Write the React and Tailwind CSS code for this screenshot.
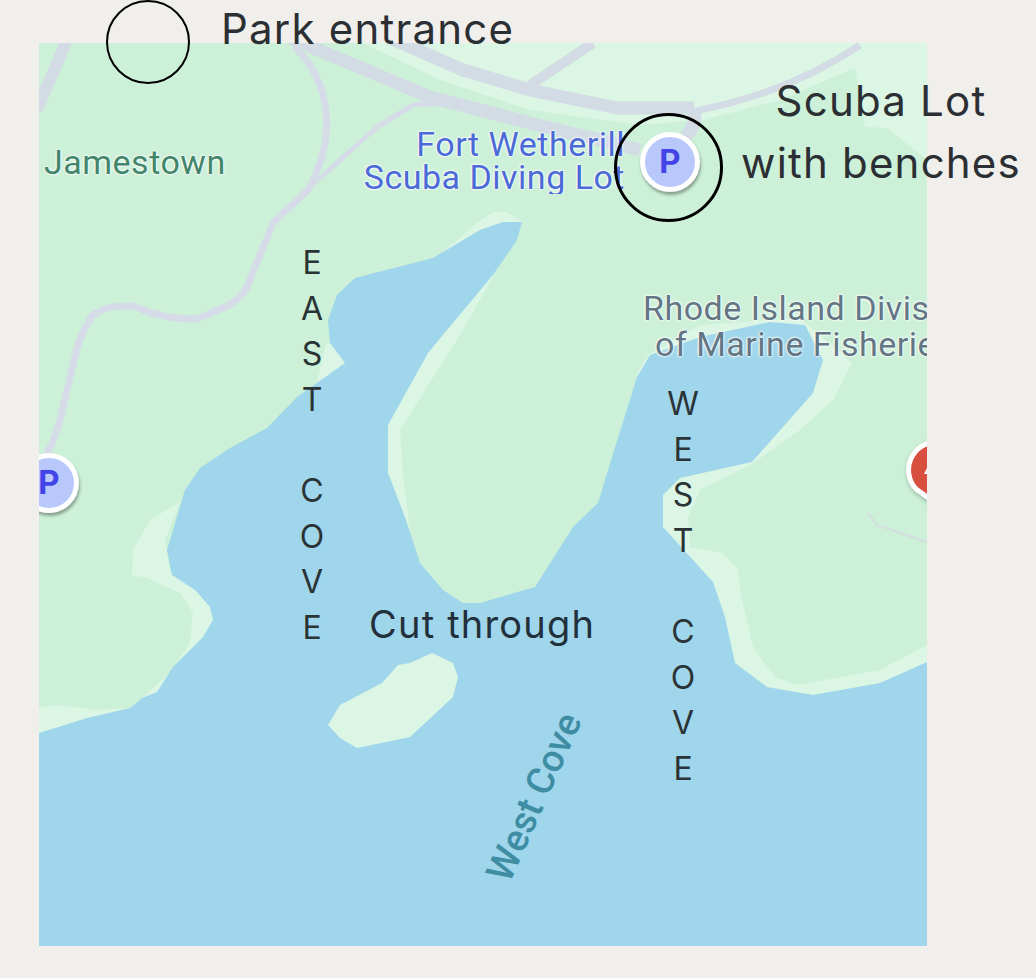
const eastCove = ['E', 'A', 'S', 'T', '\u00a0', 'C', 'O', 'V', 'E'];
const westCove = ['W', 'E', 'S', 'T', '\u00a0', 'C', 'O', 'V', 'E'];

const halo = '[text-shadow:0_0_2px_#fff,0_0_2px_#fff,0_0_3px_#fff]';

function ParkingPin({ className }) {
  return (
    <div className={`absolute flex h-[60px] w-[60px] items-center justify-center rounded-full border-[5px] border-white bg-[#b9c8fb] shadow-[1px_3px_3px_rgba(60,70,60,0.45)] ${className}`}>
      <span className="font-['Roboto',sans-serif] text-[33px] font-bold text-[#4343e8]">P</span>
    </div>
  );
}

function VerticalWord({ letters, className }) {
  return (
    <div className={`absolute flex w-[40px] flex-col items-center font-['Inter',sans-serif] text-[32px] leading-[45.6px] text-[#2a3336] ${className}`}>
      {letters.map((l, i) => <span key={i}>{l}</span>)}
    </div>
  );
}

function MapArt() {
  return (
    <svg viewBox="39 43 888 903" className="absolute inset-0 h-full w-full">
      {/* lighter land up top */}
      <polygon fill="#dcf6e5" points="363,43 927,43 927,160 887,128 865,127 855,68 780,100 703,120 640,125 530,110 440,80" />

      {/* shore rims */}
      <polygon fill="#dcf6e5" points="180,502 150,520 133,550 132,575 147,578 167,587 180,593 193,613 190,643 170,673 143,697 130,708 97,710 57,705 39,708 39,740 130,715 175,675 220,625 215,600 170,570 165,540" />
      <polygon fill="#dcf6e5" points="326,343 316,385 297,397 350,375 350,350" />
      <polygon fill="#dcf6e5" points="440,255 477,223 493,212 507,212 522,222 518,232 463,330 400,430 403,473 410,530 380,480 380,420 440,320" />
      <polygon fill="#dcf6e5" points="637,373 648,355 700,325 800,318 852,363 833,400 800,430 753,463 700,490 688,517 690,547 723,553 738,570 740,590 753,647 775,677 797,685 880,670 927,645 927,670 813,700 767,695 730,670 715,620 700,570 650,520 640,400" />

      {/* water */}
      <polygon fill="#a0d6eb" points="39,733 87,718 130,708 142,698 157,692 173,667 203,637 213,620 210,607 195,590 172,575 167,550 185,490 200,468 230,448 267,428 297,397 345,363 330,343 328,320 337,295 355,278 433,258 480,230 503,222 522,222 517,240 493,275 447,330 428,353 388,425 388,473 405,517 420,563 443,590 463,603 480,603 535,587 573,527 598,503 608,470 637,377 650,355 700,337 770,322 805,325 823,360 813,393 752,462 680,478 663,495 663,527 713,582 725,617 735,663 767,687 813,695 880,683 927,662 927,946 39,946" />
      <polygon fill="#dcf6e5" points="432,653 453,663 458,677 453,697 410,737 357,748 340,738 328,725 340,705 382,683 398,665 410,663" />

      {/* roads */}
      <g fill="none" stroke="#d3dce4" strokeLinejoin="round">
        <polyline strokeWidth="13" points="290,38 430,97 530,123 640,150" />
        <polyline strokeWidth="13" points="390,38 463,70 530,90 617,108 694,108" />
        <path strokeWidth="13" d="M694 108 Q698 124 685 137" />
        <polyline strokeWidth="10" points="530,85 593,43" />
        <path strokeWidth="7" d="M700 110 Q790 92 860 45" />
        <polyline strokeWidth="12" points="67,40 37,110" />
      </g>
      <g fill="none" stroke="#d5dce8" strokeLinejoin="round" strokeLinecap="round">
        <path strokeWidth="7" d="M296 48 Q322 75 326 110 Q330 150 308 190 L273 223 Q258 260 247 287 Q240 300 225 307 L197 319 Q165 320 133 306 Q105 305 92 316 Q80 335 76 352 L60 420 Q55 440 39 470" />
        <polyline strokeWidth="5" points="310,187 377,127 413,105 447,103" />
        <polyline strokeWidth="6" points="39,510 45,505" />
      </g>
      <polyline fill="none" stroke="#d5dde0" strokeWidth="2" points="868,513 877,525 927,542" />

      {/* red pin, cut by the map edge */}
      <path className="drop-shadow-[1px_2px_2px_rgba(60,70,60,0.4)]" fill="#d94f3f" stroke="#fff" strokeWidth="5" d="M937 442 A28 28 0 0 0 916 489 L930 499 L960 480 A28 28 0 0 0 937 442 Z" />
      <polygon fill="#fff" points="924,474 928,466 928,474" />
    </svg>
  );
}

export default function App() {
  return (
    <div className="relative h-[978px] w-[1036px] overflow-hidden bg-[#f0efeb]">
      <div className="absolute left-[39px] top-[43px] h-[903px] w-[888px] overflow-hidden bg-[#ccf0d8]">
        <MapArt />

        {/* map labels */}
        <div className={`absolute left-[5px] top-[99px] font-['Roboto',sans-serif] text-[34px] tracking-[0.5px] leading-[40px] text-[#42856a] ${halo}`}>Jamestown</div>
        <div className={`absolute left-[286px] top-[85px] w-[300px] overflow-hidden whitespace-nowrap text-right font-['Roboto',sans-serif] text-[34px] tracking-[0.5px] leading-[33px] text-[#4a6ad6] ${halo}`}>
          <div>Fort Wetherill</div>
          <div>Scuba Diving Lot</div>
        </div>
        <div className={`absolute left-[604px] top-[247px] whitespace-nowrap font-['Roboto',sans-serif] text-[34px] tracking-[0.5px] leading-[36px] text-[#627684] ${halo}`}>
          <div>Rhode Island Division</div>
          <div className="pl-[12px]">of Marine Fisheries</div>
        </div>
        <div className="absolute left-[405px] top-[732px] -rotate-[66deg] whitespace-nowrap font-['Roboto',sans-serif] text-[38px] font-medium leading-[44px] text-[#3f8da3]">West Cove</div>

        <ParkingPin className="left-[601px] top-[89px]" />
        <ParkingPin className="left-[-20px] top-[410px]" />
      </div>

      {/* hand annotations laid over the map */}
      <div className="absolute left-[106px] top-0 h-[84px] w-[84px] rounded-full border-2 border-black" />
      <div className="absolute left-[614px] top-[113px] h-[109px] w-[109px] rounded-full border-[3px] border-black" />

      <div className="absolute left-[221px] top-0 font-['Inter',sans-serif] text-[42px] tracking-[1.2px] leading-[58px] text-[#2b2f33]">Park entrance</div>
      <div className="absolute left-[729px] top-[70px] w-[304px] text-center font-['Inter',sans-serif] text-[42px] tracking-[1.2px] leading-[62px] text-[#2b2f33]">
        <div>Scuba Lot</div>
        <div>with benches</div>
      </div>
      <div className="absolute left-[369px] top-[598px] font-['Inter',sans-serif] text-[38px] tracking-[1.2px] leading-[52px] text-[#22303c]">Cut through</div>

      <VerticalWord letters={eastCove} className="left-[292px] top-[240px]" />
      <VerticalWord letters={westCove} className="left-[663px] top-[381px]" />
    </div>
  );
}
